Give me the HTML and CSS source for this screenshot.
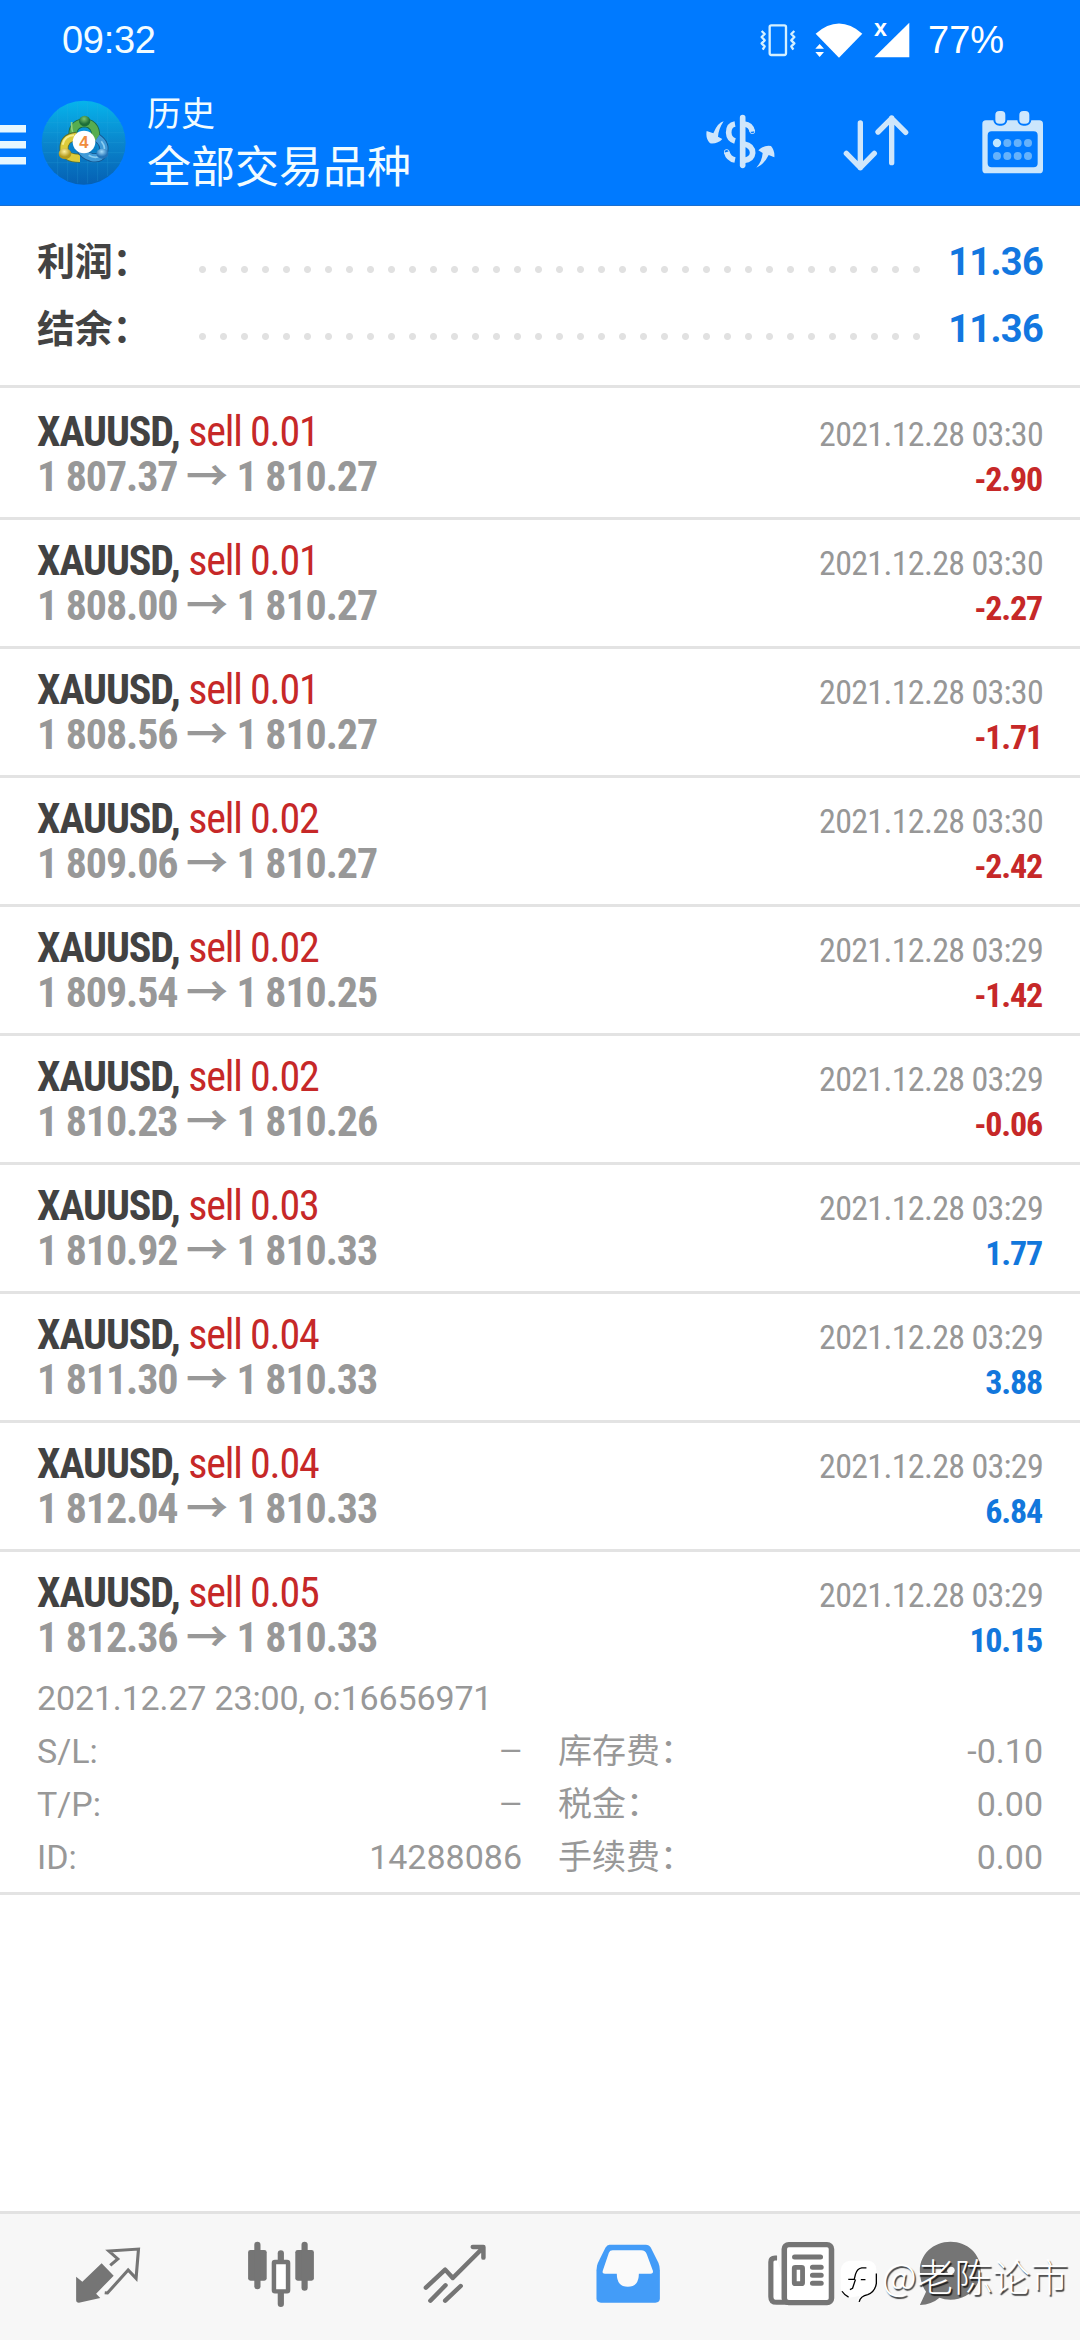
FILE: index.html
```
<!DOCTYPE html>
<html lang="zh-CN">
<head>
<meta charset="utf-8">
<title>历史</title>
<link rel="stylesheet" href="styles.css">
</head>
<body>
<div class="screen">
  <header class="header">
    <div class="status">
      <span class="clock">09:32</span>
      <svg class="status-icons" viewBox="350 60 460 120">
        <g fill="none" stroke="#d5f0ff" stroke-width="7" stroke-linejoin="round">
          <rect x="385" y="76" width="49" height="89" rx="5"/>
          <path d="M361 93l9 9-9 9 9 10-9 9 9 9-6 10M459 93l-9 9 9 9-9 10 9 9-9 9 6 10"/>
        </g>
        <g fill="#fff">
          <path d="M523 101q70-61 140 0l-70 72z"/>
          <path d="M535 128l22 20-22 27-22-27z" fill="#007aff"/>
          <path d="M535 132l13 14h-26zM535 171l13-15h-26z"/>
          <path d="M804 68v104H699z"/>
          <text x="698" y="108" class="sim-x">x</text>
        </g>
      </svg>
      <span class="battery">77%</span>
    </div>
    <div class="toolbar">
      <svg class="menu" viewBox="0 0 26 40"><path d="M0 0h26v7.500H0zM0 16h26v7.500H0zM0 32h26v7.500H0z" fill="#e6f7ff"/></svg>
      <svg class="logo" viewBox="0 0 288 288">
        <defs>
          <linearGradient id="sky" x1="0" y1="0" x2="0" y2="1"><stop offset="0" stop-color="#06b4ec"/><stop offset=".5" stop-color="#0a86cc"/><stop offset="1" stop-color="#0560b4"/></linearGradient>
          <radialGradient id="gr" cx=".45" cy=".3"><stop offset="0" stop-color="#7cc46e"/><stop offset="1" stop-color="#1d6f38"/></radialGradient>
          <radialGradient id="ye" cx=".45" cy=".3"><stop offset="0" stop-color="#fff2a0"/><stop offset="1" stop-color="#b49a1c"/></radialGradient>
          <radialGradient id="bl" cx=".45" cy=".3"><stop offset="0" stop-color="#a4dcfa"/><stop offset="1" stop-color="#2474b8"/></radialGradient>
        </defs>
        <circle cx="143" cy="140" r="126" fill="url(#sky)"/>
        <path d="M65 40v200M95 25v230M125 18v244M155 18v244M185 25v230M215 40v200M30 80h226M22 110h242M22 140h242M22 170h242M30 200h226" stroke="#35aee0" stroke-width="1.500" opacity=".4"/>
        <g fill="none">
          <path d="M112 128q-8-44 33-48 42 4 32 56" stroke="#1b6a46" stroke-width="27"/>
          <path d="M112 128q-8-44 33-48 42 4 32 56" stroke="#56ad50" stroke-width="22"/>
          <path d="M107 78q-1 20 3 30" stroke="#8fd080" stroke-width="5"/>
          <path d="M122 121q-40 4-38 40 4 26 48 26" stroke="#5b6f2c" stroke-width="27"/>
          <path d="M122 121q-40 4-38 40 4 26 48 26" stroke="#dccb3a" stroke-width="22"/>
          <path d="M80 146q6-28 34-28" stroke="#f5ec8c" stroke-width="6"/>
          <path d="M184 126q26 18 18 44-10 20-36 14-22-6-32-24" stroke="#15558e" stroke-width="27"/>
          <path d="M184 126q26 18 18 44-10 20-36 14-22-6-32-24" stroke="#3f9ad8" stroke-width="22"/>
          <path d="M196 136q18 22 2 42-20 12-40 0" stroke="#8bcdf0" stroke-width="5"/>
        </g>
        <circle cx="144" cy="138" r="34" fill="#fff"/>
        <text x="144" y="156" class="logo-num">4</text>
        <ellipse cx="146" cy="75" rx="17" ry="16" fill="url(#gr)"/>
        <ellipse cx="87" cy="173" rx="19" ry="16" fill="url(#ye)"/>
        <ellipse cx="199" cy="173" rx="18" ry="15" fill="url(#bl)"/>
      </svg>
      <div class="titles">
        <div class="title-small">历史</div>
        <div class="title-big">全部交易品种</div>
      </div>
      <div class="actions">
        <svg class="act" viewBox="195 320 210 210">
          <g fill="none" stroke="#cfe6fb" stroke-width="17">
            <path d="M308 352v143" stroke-linecap="round"/>
            <path d="M285 371q-19 3-19 26 1 20 19 25M285 479q-20-4-25-24" />
            <circle cx="260" cy="455" r="1" stroke-width="14"/>
            <path d="M312 371q22 2 25 23M312 431q26 5 26 27-2 20-26 22"/>
            <circle cx="337" cy="393" r="1" stroke-width="14"/>
          </g>
          <path d="M251 363q-18 4-31 36l-20-7q-4 22 10 37 24 2 37-13l-13-7q2-24 17-46zM349 502q24-10 37-38l17 7q2-20-10-34-20-4-38 13l13 8q-2 26-19 44z" fill="#cfe6fb"/>
        </svg>
        <svg class="act" viewBox="600 320 210 210">
          <path d="M661 368v134M619 459l42 43 42-43M755 487V353M714 395l41-41 42 42" fill="none" stroke="#cfe6fb" stroke-width="16" stroke-linecap="round" stroke-linejoin="round"/>
        </svg>
        <svg class="act cal" viewBox="1020 320 195 210">
          <path fill-rule="evenodd" d="M1038 360h160q11 0 11 11v137q0 11-11 11h-160q-11 0-11-11V371q0-11 11-11zM1055 393q-12 0-12 12v84q0 12 12 12h126q12 0 12-12v-84q0-12-12-12z" fill="#cbe6fc"/>
          <g fill="#cfe8fd" stroke="#007aff" stroke-width="6"><rect x="1063" y="329" width="36" height="44" rx="15"/><rect x="1135" y="329" width="36" height="44" rx="15"/></g>
          <g fill="#66b2fb"><circle cx="1071" cy="428" r="12.500" fill="#bfe6ff"/><circle cx="1102" cy="428" r="12"/><circle cx="1133" cy="428" r="12"/><circle cx="1164" cy="428" r="12"/><circle cx="1071" cy="467" r="12"/><circle cx="1102" cy="467" r="12"/><circle cx="1133" cy="467" r="12"/><circle cx="1164" cy="467" r="12"/></g>
        </svg>
      </div>
    </div>
  </header>

  <section class="summary">
    <div class="sum-row"><span class="sum-label">利润：</span><span class="dots"></span><span class="sum-value">11.36</span></div>
    <div class="sum-row"><span class="sum-label">结余：</span><span class="dots"></span><span class="sum-value">11.36</span></div>
  </section>

  <main class="deals">
    <article class="deal first">
      <div class="line"><span class="symbol">XAUUSD, <span class="side">sell 0.01</span></span><span class="time">2021.12.28 03:30</span></div>
      <div class="line"><span class="prices">1 807.37 <span class="arrow">→</span> 1 810.27</span><span class="profit loss">-2.90</span></div>
    </article>
    <article class="deal">
      <div class="line"><span class="symbol">XAUUSD, <span class="side">sell 0.01</span></span><span class="time">2021.12.28 03:30</span></div>
      <div class="line"><span class="prices">1 808.00 <span class="arrow">→</span> 1 810.27</span><span class="profit loss">-2.27</span></div>
    </article>
    <article class="deal">
      <div class="line"><span class="symbol">XAUUSD, <span class="side">sell 0.01</span></span><span class="time">2021.12.28 03:30</span></div>
      <div class="line"><span class="prices">1 808.56 <span class="arrow">→</span> 1 810.27</span><span class="profit loss">-1.71</span></div>
    </article>
    <article class="deal">
      <div class="line"><span class="symbol">XAUUSD, <span class="side">sell 0.02</span></span><span class="time">2021.12.28 03:30</span></div>
      <div class="line"><span class="prices">1 809.06 <span class="arrow">→</span> 1 810.27</span><span class="profit loss">-2.42</span></div>
    </article>
    <article class="deal">
      <div class="line"><span class="symbol">XAUUSD, <span class="side">sell 0.02</span></span><span class="time">2021.12.28 03:29</span></div>
      <div class="line"><span class="prices">1 809.54 <span class="arrow">→</span> 1 810.25</span><span class="profit loss">-1.42</span></div>
    </article>
    <article class="deal">
      <div class="line"><span class="symbol">XAUUSD, <span class="side">sell 0.02</span></span><span class="time">2021.12.28 03:29</span></div>
      <div class="line"><span class="prices">1 810.23 <span class="arrow">→</span> 1 810.26</span><span class="profit loss">-0.06</span></div>
    </article>
    <article class="deal">
      <div class="line"><span class="symbol">XAUUSD, <span class="side">sell 0.03</span></span><span class="time">2021.12.28 03:29</span></div>
      <div class="line"><span class="prices">1 810.92 <span class="arrow">→</span> 1 810.33</span><span class="profit">1.77</span></div>
    </article>
    <article class="deal">
      <div class="line"><span class="symbol">XAUUSD, <span class="side">sell 0.04</span></span><span class="time">2021.12.28 03:29</span></div>
      <div class="line"><span class="prices">1 811.30 <span class="arrow">→</span> 1 810.33</span><span class="profit">3.88</span></div>
    </article>
    <article class="deal">
      <div class="line"><span class="symbol">XAUUSD, <span class="side">sell 0.04</span></span><span class="time">2021.12.28 03:29</span></div>
      <div class="line"><span class="prices">1 812.04 <span class="arrow">→</span> 1 810.33</span><span class="profit">6.84</span></div>
    </article>
    <article class="deal open">
      <div class="line"><span class="symbol">XAUUSD, <span class="side">sell 0.05</span></span><span class="time">2021.12.28 03:29</span></div>
      <div class="line"><span class="prices">1 812.36 <span class="arrow">→</span> 1 810.33</span><span class="profit">10.15</span></div>
      <div class="details">
        <div class="order">2021.12.27 23:00, o:16656971</div>
        <div class="pair"><span>S/L:</span><span class="none">—</span></div>
        <div class="pair"><span>库存费：</span><span>-0.10</span></div>
        <div class="pair"><span>T/P:</span><span class="none">—</span></div>
        <div class="pair"><span>税金：</span><span>0.00</span></div>
        <div class="pair"><span>ID:</span><span>14288086</span></div>
        <div class="pair"><span>手续费：</span><span>0.00</span></div>
      </div>
    </article>
  </main>

  <nav class="nav">
    <svg viewBox="209 145 209 210" preserveAspectRatio="none">
      <path d="M295 221l35 37-51 54 12 13-62 14q-8 0-8-8v-70l18 15z" fill="#757575" stroke="none"/>
      <path d="M320 227l22-19-26-24 86-6-7 88-23-25-60 69-8-1" fill="none" stroke="#757575" stroke-width="9"/>
    </svg>
    <svg viewBox="709 145 209 210" preserveAspectRatio="none">
      <g fill="#757575"><rect x="718" y="181" width="54" height="92" rx="7"/><rect x="855" y="181" width="54" height="92" rx="7"/><rect x="736" y="156" width="18" height="143" rx="9"/><rect x="873" y="156" width="18" height="147" rx="9"/><rect x="804" y="182" width="18" height="40" rx="9"/><rect x="804" y="300" width="18" height="52" rx="9"/></g>
      <rect x="793" y="217" width="41" height="88" rx="3" fill="#fff" stroke="#757575" stroke-width="13"/>
    </svg>
    <svg viewBox="1212 145 209 210" preserveAspectRatio="none">
      <path d="M1232 294l56-54 22 25 88-91M1368 172h31v32M1245 333l44-46M1288 333l45-44" fill="none" stroke="#757575" stroke-width="13" stroke-linecap="round" stroke-linejoin="round"/>
    </svg>
    <svg viewBox="149 145 209 210" preserveAspectRatio="none">
      <path d="M200 165h105q10 0 15 9l22 46q4 10 4 22v84q0 13-13 13H175q-13 0-13-13v-84q0-12 4-22l22-46q5-9 12-9z" fill="#439cf8"/>
      <path d="M209 182q-8 0-11 7l-18 55q-2 8 7 8h34q0 39 32 39t32-39h34q8 0 7-8l-18-50q-4-12-16-12z" fill="#fafafa"/>
    </svg>
    <svg viewBox="655 145 209 210" preserveAspectRatio="none">
      <path d="M690 205h-6q-12 0-12 12v104q0 17 17 17h35" fill="#fff" stroke="#757575" stroke-width="15"/>
      <rect x="711" y="165" width="137" height="174" rx="13" fill="#fff" stroke="#757575" stroke-width="16"/>
      <path d="M741 202h75M793 233h25M793 257h25M793 281h25" stroke="#757575" stroke-width="15" stroke-linecap="round"/>
      <rect x="740" y="233" width="24" height="49" rx="3" fill="#fff" stroke="#757575" stroke-width="14"/>
    </svg>
    <svg class="chat" viewBox="1085 145 209 210" preserveAspectRatio="none">
      <path d="M1191 156c50 0 88 38 88 86s-38 88-88 88q-18 0-32-6-22 20-57 22l18-40c-12-16-18-40-18-64 0-48 39-86 89-86z" fill="#757575"/>
      <g fill="#f7f7f7"><circle cx="1154" cy="242" r="11"/><circle cx="1192" cy="242" r="11"/></g>
    </svg>
    <div class="watermark">
      <svg class="wm-logo" viewBox="30 60 115 132">
        <path d="M60 62h56q22 2 24 26v40q-2 24-24 32-14 4-22 20-6 8-12 2l8-14-32 6-20-14-6-14V90q2-24 28-28z" fill="#fff"/>
        <path d="M110 83H96q-14 2-19 19l-4 16H55M77 118l-9 27-8 4M93 119h14M140 100v30q-4 26-26 34-22 4-26 22M36 154q8 12 20 18" fill="none" stroke="#000" stroke-width="4"/>
      </svg>
      <span>@老陈论市</span>
    </div>
  </nav>
</div>
</body>
</html>
```
FILE: styles.css
```
* { box-sizing: border-box; }
body { margin: 0; background: #fff; font-family: Roboto, "Noto Sans CJK SC", sans-serif; }
.screen { width: 1080px; height: 2340px; display: flex; flex-direction: column; overflow: hidden; }

.header { height: 206px; flex: none; background: #007aff; color: #f2fcff; border-bottom: 1px solid #1a6fd0; }
.status { height: 80px; display: flex; align-items: center; padding: 0 75px 0 62px; font: 38px/80px "Liberation Sans", sans-serif; }
.clock { flex: 1; letter-spacing: -.3px; }
.status-icons { width: 153.300px; height: 40px; margin-right: 17px; overflow: visible; }
.sim-x { font: bold 70px "Liberation Sans", sans-serif; }
.battery { width: 77px; color: #fff; white-space: nowrap; }
.toolbar { display: flex; align-items: flex-start; padding-right: 35px; height: 125px; }
.menu { width: 26px; height: 40px; margin-top: 45px; }
.logo { width: 96px; height: 96px; margin: 16px 0 0 10px; }
.logo-num { font: bold 50px "Liberation Sans", sans-serif; fill: #f08c3c; text-anchor: middle; }
.titles { margin: 10px 0 0 15px; flex: 1; }
.title-small { font-size: 34px; line-height: 48px; }
.title-big { font-size: 44px; line-height: 60px; }
.actions { display: flex; margin-top: 27px; }
.act { width: 70px; height: 70px; margin-right: 65px; }
.act + .act { margin-right: 70px; }
.act.cal { width: 65px; margin-right: 0; }

.summary { flex: none; height: 182px; padding: 23px 37px 0; border-bottom: 3px solid #e3e3e3; }
.sum-row { display: flex; height: 67px; font-size: 38px; line-height: 67px; font-weight: 700; color: #434343; }
.sum-label { width: 155px; letter-spacing: -.3px; }
.dots { width: 735px; background: radial-gradient(circle at 10.500px 40.500px, #e1e1e1 3px, transparent 4px) 0 0 / 21px 67px repeat-x; }
.sum-value { flex: 1; text-align: right; color: #1277e0; letter-spacing: -.7px; }

.deal { height: 129px; padding: 18px 37px 0; border-bottom: 3px solid #e3e3e3; font-family: "Roboto Condensed", "Noto Sans CJK SC", sans-serif; }
.deal.first { height: 132px; padding-top: 21px; }
.deal.open { height: 343px; }
.line { display: flex; justify-content: space-between; align-items: baseline; height: 45px; line-height: 45px; white-space: nowrap; }
.symbol { font-size: 42px; font-weight: 700; color: #424242; letter-spacing: -1.100px; }
.side { font-weight: 400; color: #c62828; letter-spacing: -1.200px; }
.prices { font-size: 42px; font-weight: 700; color: #989898; letter-spacing: -1.100px; }
.arrow { font-family: "Noto Sans CJK SC", sans-serif; line-height: 0; letter-spacing: 0; }
.time { font-size: 34px; color: #979797; letter-spacing: -.700px; }
.profit { font-size: 34px; font-weight: 700; color: #1277dc; letter-spacing: -1.200px; padding-right: 1px; }
.profit.loss { color: #c62828; }

.details { display: grid; grid-template-columns: 485px 485px; column-gap: 36px; padding-top: 12px; font: 34px/53px Roboto, "Noto Sans CJK SC", sans-serif; color: #989898; }
.order { grid-column: 1 / 3; letter-spacing: -.150px; }
.pair { display: flex; justify-content: space-between; height: 53px; }
.none { font-size: 29px; }

.nav { position: relative; flex: none; height: 129px; margin-top: auto; background: #f7f7f7; border-top: 3px solid #e2e2e2; display: flex; align-items: flex-start; padding: 24px 0 0 72px; gap: 101.300px; }
.nav > svg { width: 72px; height: 70px; flex: none; }
.nav > .chat { margin-left: -24px; }
.watermark { position: absolute; left: 840px; top: 35px; display: flex; align-items: flex-start; color: #fff; font: 38px/52px "Noto Sans CJK SC", sans-serif; font-weight: 300; white-space: nowrap; text-shadow: 1.500px 1.500px 1px rgba(0, 0, 0, .75); }
.wm-logo { width: 38px; height: 44px; margin: 11px 4px 0 0; }
```
